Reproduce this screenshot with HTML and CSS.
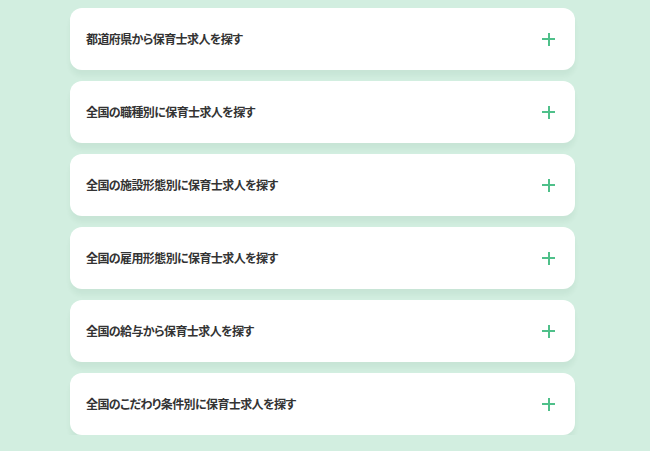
FILE: index.html
```html
<!DOCTYPE html>
<html lang="ja">
<head>
<meta charset="utf-8">
<link rel="stylesheet" href="styles.css">
</head>
<body>
<div class="list">
  <div class="card"><span class="label">都道府県から保育士求人を探す</span><span class="plus"></span></div>
  <div class="card"><span class="label">全国の職種別に保育士求人を探す</span><span class="plus"></span></div>
  <div class="card"><span class="label">全国の施設形態別に保育士求人を探す</span><span class="plus"></span></div>
  <div class="card"><span class="label">全国の雇用形態別に保育士求人を探す</span><span class="plus"></span></div>
  <div class="card"><span class="label">全国の給与から保育士求人を探す</span><span class="plus"></span></div>
  <div class="card"><span class="label">全国のこだわり条件別に保育士求人を探す</span><span class="plus"></span></div>
</div>
</body>
</html>
```

FILE: styles.css
```css
html, body {
  margin: 0;
  padding: 0;
  background: #d2eee0;
}
body {
  font-family: "Noto Sans CJK JP", "Noto Sans", sans-serif;
}
.list {
  width: 505px;
  margin-left: 70px;
  padding-top: 8px;
  display: flex;
  flex-direction: column;
  gap: 11px;
}
.card {
  height: 62px;
  background: #ffffff;
  border-radius: 12px;
  box-shadow: 0 6px 5px rgba(0, 70, 40, 0.05);
  display: flex;
  align-items: center;
  justify-content: space-between;
  padding: 0 20px 0 16px;
}
.label {
  font-size: 12px;
  font-weight: 700;
  color: #333333;
  font-feature-settings: "palt";
  letter-spacing: -0.6px;
  margin-top: -2px;
}
.plus {
  position: relative;
  width: 13px;
  height: 13px;
}
.plus::before, .plus::after {
  content: "";
  position: absolute;
  background: #4fc08a;
}
.plus::before {
  left: 0;
  top: 5.5px;
  width: 13px;
  height: 2px;
}
.plus::after {
  left: 5.5px;
  top: 0;
  width: 2px;
  height: 13px;
}
```
